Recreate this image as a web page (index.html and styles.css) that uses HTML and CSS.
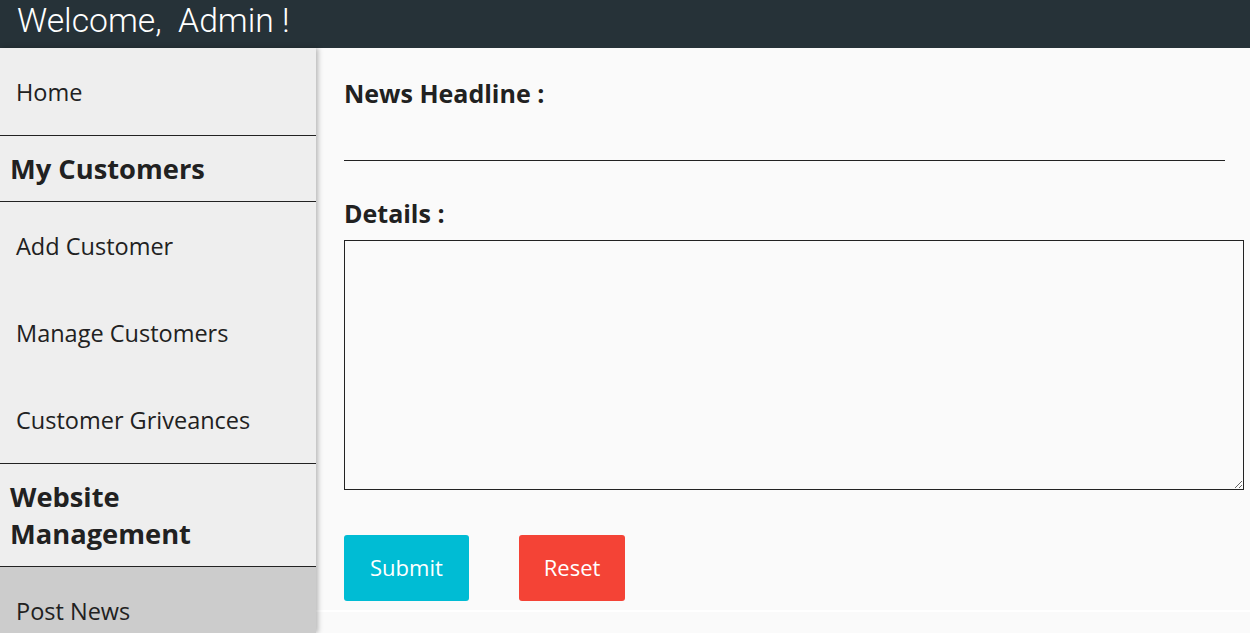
FILE: index.html
```html
<!DOCTYPE html>
<html lang="en">
<head>
<meta charset="utf-8">
<title>Admin - Post News</title>
<link rel="stylesheet" href="styles.css">
</head>
<body>
<header class="topbar">Welcome,&nbsp; Admin !</header>
<div class="layout">
  <nav class="sidebar">
    <a class="nav-item" href="#">Home</a>
    <div class="nav-head">My Customers</div>
    <a class="nav-item" href="#">Add Customer</a>
    <a class="nav-item" href="#">Manage Customers</a>
    <a class="nav-item" href="#">Customer Griveances</a>
    <div class="nav-head">Website Management</div>
    <a class="nav-item active" href="#">Post News</a>
  </nav>
  <main class="content">
    <form class="news-form">
      <label class="field-label" for="headline">News Headline :</label>
      <input class="line-input" id="headline" type="text">
      <label class="field-label details" for="details">Details :</label>
      <textarea class="box-input" id="details"></textarea>
      <div class="actions">
        <button class="btn btn-submit" type="button">Submit</button>
        <button class="btn btn-reset" type="reset">Reset</button>
      </div>
    </form>
  </main>
</div>
</body>
</html>
```
FILE: styles.css
```css
* { box-sizing: border-box; }
html, body { margin: 0; padding: 0; }
body {
  background: #fafafa;
  font-family: "Open Sans", "Liberation Sans", sans-serif;
  color: #212121;
  height: 633px;
  overflow: hidden;
}
.topbar {
  height: 48px;
  background: #263238;
  color: #ffffff;
  font-family: Roboto, "Liberation Sans", sans-serif;
  font-weight: 300;
  font-size: 33.7px;
  line-height: 42px;
  padding-left: 17px;
  white-space: nowrap;
}
.layout {
  display: flex;
  height: 585px;
}
.sidebar {
  width: 316px;
  flex: 0 0 316px;
  background: #eeeeee;
  box-shadow: 2px 0 5px rgba(0,0,0,0.28);
  display: flex;
  flex-direction: column;
  position: relative;
  z-index: 1;
}
.nav-item {
  display: block;
  color: #212121;
  text-decoration: none;
  font-size: 23.5px;
  line-height: 31px;
  padding: 29px 17px 27px 16px;
}
.nav-item.active {
  background: #cccccc;
  flex: 1;
}
.nav-head {
  font-weight: 700;
  font-size: 27.3px;
  line-height: 37px;
  padding: 14px 20px 14px 10px;
  border-top: 1px solid #222;
  border-bottom: 1px solid #222;
}
.content {
  flex: 1;
  display: flex;
  flex-direction: column;
}
.news-form {
  padding: 30px 6px 9px 28px;
  background: #fafafa;
  border-bottom: 2px solid #ffffff;
  display: flex;
  flex-direction: column;
  align-items: flex-start;
}
.field-label {
  font-weight: 700;
  font-size: 25px;
  line-height: 30px;
  color: #212121;
}
.line-input {
  width: 881px;
  height: 53px;
  border: none;
  border-bottom: 1px solid #222;
  background: transparent;
  outline: none;
  font: inherit;
}
.details {
  margin-top: 37px;
}
.box-input {
  margin-top: 12px;
  width: 900px;
  height: 250px;
  border: 1px solid #222;
  background: transparent;
  resize: both;
  font: inherit;
}
.actions {
  margin-top: 45px;
  display: flex;
  gap: 50px;
}
.btn {
  height: 66px;
  border: none;
  border-radius: 3px;
  color: #ffffff;
  font-family: "Open Sans", "Liberation Sans", sans-serif;
  font-size: 22px;
  padding: 0 25px 3px;
  cursor: pointer;
}
.btn-submit { background: #00bcd4; padding: 0 26px 3px; }
.btn-reset { background: #f44336; }
```
